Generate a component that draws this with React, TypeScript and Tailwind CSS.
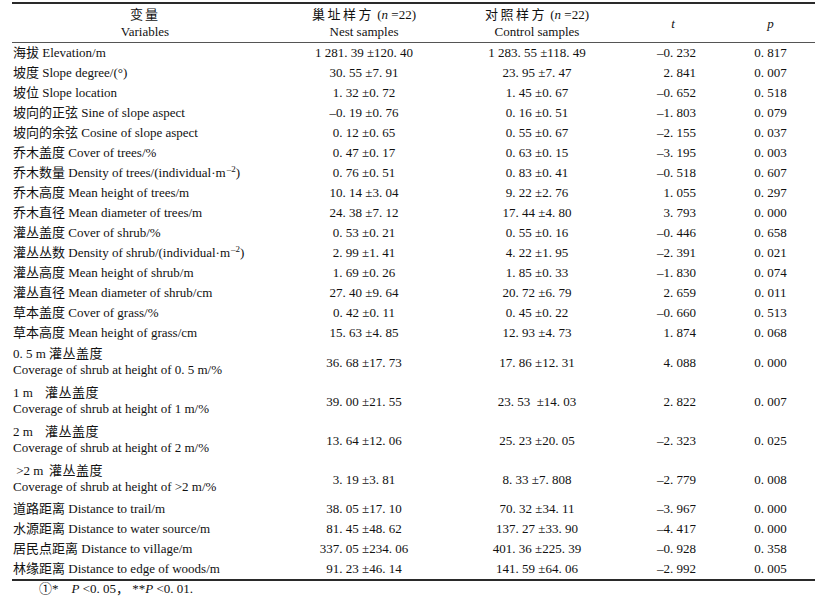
import React from 'react';

type Row = {
  zh: string;
  en: string;
  sup?: string;
  nest: string;
  control: string;
  t: string;
  p: string;
  // two-line rows: height prefix like "0. 5 m" and its box width
  pre?: string;
  preW?: string;
};

const rows: Row[] = [
  { zh: '海拔', en: 'Elevation/m', nest: '1 281. 39 ±120. 40', control: '1 283. 55 ±118. 49', t: '–0. 232', p: '0. 817' },
  { zh: '坡度', en: 'Slope degree/(°)', nest: '30. 55 ±7. 91', control: '23. 95 ±7. 47', t: '2. 841', p: '0. 007' },
  { zh: '坡位', en: 'Slope location', nest: '1. 32 ±0. 72', control: '1. 45 ±0. 67', t: '–0. 652', p: '0. 518' },
  { zh: '坡向的正弦', en: 'Sine of slope aspect', nest: '–0. 19 ±0. 76', control: '0. 16 ±0. 51', t: '–1. 803', p: '0. 079' },
  { zh: '坡向的余弦', en: 'Cosine of slope aspect', nest: '0. 12 ±0. 65', control: '0. 55 ±0. 67', t: '–2. 155', p: '0. 037' },
  { zh: '乔木盖度', en: 'Cover of trees/%', nest: '0. 47 ±0. 17', control: '0. 63 ±0. 15', t: '–3. 195', p: '0. 003' },
  { zh: '乔木数量', en: 'Density of trees/(individual·m', sup: '–2', nest: '0. 76 ±0. 51', control: '0. 83 ±0. 41', t: '–0. 518', p: '0. 607' },
  { zh: '乔木高度', en: 'Mean height of trees/m', nest: '10. 14 ±3. 04', control: '9. 22 ±2. 76', t: '1. 055', p: '0. 297' },
  { zh: '乔木直径', en: 'Mean diameter of trees/m', nest: '24. 38 ±7. 12', control: '17. 44 ±4. 80', t: '3. 793', p: '0. 000' },
  { zh: '灌丛盖度', en: 'Cover of shrub/%', nest: '0. 53 ±0. 21', control: '0. 55 ±0. 16', t: '–0. 446', p: '0. 658' },
  { zh: '灌丛丛数', en: 'Density of shrub/(individual·m', sup: '–2', nest: '2. 99 ±1. 41', control: '4. 22 ±1. 95', t: '–2. 391', p: '0. 021' },
  { zh: '灌丛高度', en: 'Mean height of shrub/m', nest: '1. 69 ±0. 26', control: '1. 85 ±0. 33', t: '–1. 830', p: '0. 074' },
  { zh: '灌丛直径', en: 'Mean diameter of shrub/cm', nest: '27. 40 ±9. 64', control: '20. 72 ±6. 79', t: '2. 659', p: '0. 011' },
  { zh: '草本盖度', en: 'Cover of grass/%', nest: '0. 42 ±0. 11', control: '0. 45 ±0. 22', t: '–0. 660', p: '0. 513' },
  { zh: '草本高度', en: 'Mean height of grass/cm', nest: '15. 63 ±4. 85', control: '12. 93 ±4. 73', t: '1. 874', p: '0. 068' },
  { pre: '0. 5 m', preW: 'w-[36px]', zh: '灌丛盖度', en: 'Coverage of shrub at height of 0. 5 m/%', nest: '36. 68 ±17. 73', control: '17. 86 ±12. 31', t: '4. 088', p: '0. 000' },
  { pre: '1 m', preW: 'w-[32px]', zh: '灌丛盖度', en: 'Coverage of shrub at height of 1 m/%', nest: '39. 00 ±21. 55', control: '23. 53\u00a0\u00a0±14. 03', t: '2. 822', p: '0. 007' },
  { pre: '2 m', preW: 'w-[32px]', zh: '灌丛盖度', en: 'Coverage of shrub at height of 2 m/%', nest: '13. 64 ±12. 06', control: '25. 23 ±20. 05', t: '–2. 323', p: '0. 025' },
  { pre: '\u00a0>2 m', preW: 'w-[36px]', zh: '灌丛盖度', en: 'Coverage of shrub at height of >2 m/%', nest: '3. 19 ±3. 81', control: '8. 33 ±7. 808', t: '–2. 779', p: '0. 008' },
  { zh: '道路距离', en: 'Distance to trail/m', nest: '38. 05 ±17. 10', control: '70. 32 ±34. 11', t: '–3. 967', p: '0. 000' },
  { zh: '水源距离', en: 'Distance to water source/m', nest: '81. 45 ±48. 62', control: '137. 27 ±33. 90', t: '–4. 417', p: '0. 000' },
  { zh: '居民点距离', en: 'Distance to village/m', nest: '337. 05 ±234. 06', control: '401. 36 ±225. 39', t: '–0. 928', p: '0. 358' },
  { zh: '林缘距离', en: 'Distance to edge of woods/m', nest: '91. 23 ±46. 14', control: '141. 59 ±64. 06', t: '–2. 992', p: '0. 005' },
];

const grid = 'grid grid-cols-[266px_172px_174px_102px_89px] items-center';

const English = ({ row }: { row: Row }) => (
  <span>
    {row.en}
    {row.sup && (
      <>
        <sup className="text-[9px] -top-[5px] ml-[1px]">{row.sup}</sup>)
      </>
    )}
  </span>
);

const App = () => {
  return (
    <div className="w-[832px] h-[602px] bg-white overflow-hidden text-[#111] text-[13px] font-['Liberation_Serif','Noto_Sans_CJK_SC',serif]">
      <div className="ml-[12px] mt-[2px] w-[803px] border-t-2 border-b-2 border-[#2a2a2a]">
        {/* header */}
        <div className={`${grid} h-[39px] border-b-[1.5px] border-[#555] leading-[17px]`}>
          <div className="flex flex-col items-center">
            <span className="tracking-[2px]">变量</span>
            <span>Variables</span>
          </div>
          <div className="flex flex-col items-center">
            <span className="whitespace-pre">
              <span className="tracking-[2.5px]">巢址样方</span> (<i>n</i> =22)
            </span>
            <span>Nest samples</span>
          </div>
          <div className="flex flex-col items-center">
            <span className="whitespace-pre">
              <span className="tracking-[2.5px]">对照样方</span> (<i>n</i> =22)
            </span>
            <span>Control samples</span>
          </div>
          <div className="text-center pr-[4px]">
            <i>t</i>
          </div>
          <div className="text-center">
            <i>p</i>
          </div>
        </div>

        {rows.map((row) => (
          <div key={row.en} className={`${grid} ${row.pre ? 'h-[39px]' : 'h-5'}`}>
            {row.pre ? (
              <div className="flex flex-col pl-[1px] leading-[16px] -mt-[2px]">
                <span className="flex whitespace-pre">
                  <span className={row.preW}>{row.pre}</span>
                  <span className="tracking-[0.5px]">{row.zh}</span>
                </span>
                <span>{row.en}</span>
              </div>
            ) : (
              <div className="pl-[1px] whitespace-nowrap">
                {row.zh} <English row={row} />
              </div>
            )}
            <div className="text-center whitespace-pre">{row.nest}</div>
            <div className="text-center whitespace-pre">{row.control}</div>
            <div className="text-right pr-[30px]">{row.t}</div>
            <div className="text-center">{row.p}</div>
          </div>
        ))}
      </div>

      <div className="ml-[39px] mt-[1px] leading-[14px] whitespace-pre">
        ①*{'    '}<i>P</i> &lt;0. 05，{' '}**<i>P</i> &lt;0. 01.
      </div>
    </div>
  );
};

export default App;
